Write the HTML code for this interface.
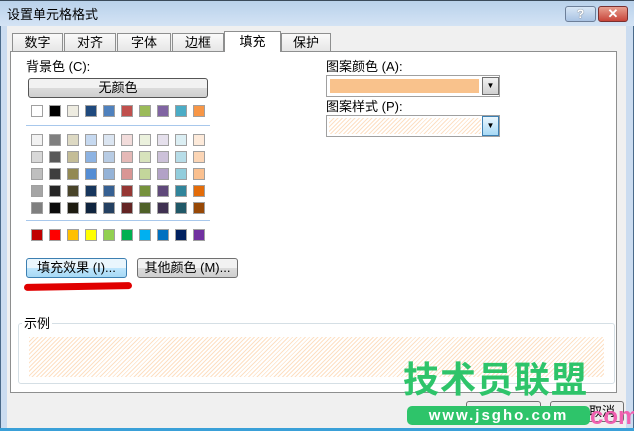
<!DOCTYPE html>
<html><head><meta charset="utf-8"><style>
*{box-sizing:border-box;margin:0;padding:0}
body{width:634px;height:431px;overflow:hidden;background:#f0f0f0;font-family:"Liberation Sans","Noto Sans CJK SC","WenQuanYi Zen Hei",sans-serif;font-size:12px;color:#000;position:relative}
.a{position:absolute}
.title{left:0;top:0;width:634px;height:26px;background:linear-gradient(#b9d1ea,#c9dcf1 60%,#d3e3f4);border-top:1px solid #3a4a5a}
.tab{top:33px;height:18px;background:linear-gradient(#fafafa,#e6e6e6);border:1px solid #8e8f8f;border-bottom:none;text-align:center;line-height:17px;font-size:13px}
.sw{width:12px;height:12px;border:1px solid #a0a0a0}
.btn{border:1px solid #707070;border-radius:3px;background:linear-gradient(#f2f2f2 50%,#dcdcdc 50%,#cfcfcf);text-align:center;line-height:18px}
.hatch{background:repeating-linear-gradient(135deg,#fde0c4 0 1px,#fff 1px 3px)}
.lbl{font-size:13px;line-height:15px}
</style></head><body>
<div class="a title"></div>
<div class="a" style="left:0;top:26px;width:7px;height:405px;background:#cbdcf0;border-left:1px solid #4a6a8a"></div>
<div class="a" style="left:626px;top:26px;width:8px;height:405px;background:#cbdcf0;border-right:1px solid #4a6a8a"></div>
<div class="a" style="left:0;top:428px;width:634px;height:3px;background:#3aa0d8"></div>
<div class="a" style="left:7px;top:4px;font-size:13px;color:#000">设置单元格格式</div>
<div class="a" style="left:565px;top:6px;width:31px;height:16px;border:1px solid #6d7f99;border-radius:3px;background:linear-gradient(#d8e6f5,#a9c3e3);text-align:center;font-weight:bold;line-height:14px;color:#fff;text-shadow:0 0 1px #333">?</div>
<div class="a" style="left:598px;top:6px;width:30px;height:16px;border:1px solid #7a3030;border-radius:3px;background:linear-gradient(#e8a090,#c8453a);text-align:center;font-weight:bold;line-height:14px;color:#fff;font-size:13px">✕</div>

<div class="a" style="left:10px;top:51px;width:607px;height:342px;background:#fff;border:1px solid #8e8f8f"></div>
<div class="a tab" style="left:12px;width:51px">数字</div>
<div class="a tab" style="left:64px;width:52px">对齐</div>
<div class="a tab" style="left:117px;width:54px">字体</div>
<div class="a tab" style="left:172px;width:52px">边框</div>
<div class="a tab" style="left:224px;top:31px;height:21px;width:57px;background:#fff;line-height:19px">填充</div>
<div class="a tab" style="left:281px;width:50px">保护</div>

<div class="a lbl" style="left:26px;top:59px">背景色 (C):</div>
<div class="a btn" style="left:28px;top:78px;width:180px;height:20px;border-color:#555;font-size:13px">无颜色</div>
<div id="sw"></div>
<div class="a" style="left:26px;top:125px;width:184px;height:1px;background:#a8c8ec"></div>
<div class="a" style="left:26px;top:220px;width:184px;height:1px;background:#a8c8ec"></div>
<div class="a btn" style="left:26px;top:258px;width:101px;height:20px;border-color:#3c7fb1;background:linear-gradient(#eaf6fd 50%,#bee6fd 50%,#a7d9f5);font-size:13px">填充效果 (I)...</div>
<div class="a btn" style="left:137px;top:258px;width:101px;height:20px;font-size:13px">其他颜色 (M)...</div>
<div class="a" style="left:24px;top:283px;width:108px;height:7px;background:#e00000;border-radius:4px;transform:rotate(-1deg)"></div>

<div class="a lbl" style="left:326px;top:59px">图案颜色 (A):</div>
<div class="a" style="left:326px;top:75px;width:174px;height:22px;border:1px solid #a0a0a0;background:#fff"></div>
<div class="a" style="left:330px;top:79px;width:149px;height:14px;background:#f9c28c"></div>
<div class="a" style="left:482px;top:77px;width:17px;height:18px;border:1px solid #707070;background:linear-gradient(#f2f2f2,#d0d0d0);font-size:8px;text-align:center;line-height:16px">▼</div>
<div class="a lbl" style="left:326px;top:99px">图案样式 (P):</div>
<div class="a" style="left:326px;top:115px;width:174px;height:22px;border:1px solid #a0a0a0;background:#fff"></div>
<div class="a hatch" style="left:329px;top:118px;width:152px;height:16px"></div>
<div class="a" style="left:482px;top:116px;width:17px;height:20px;border:1px solid #3c7fb1;background:linear-gradient(#eaf6fd,#a7d9f5);font-size:8px;text-align:center;line-height:18px">▼</div>

<div class="a" style="left:18px;top:323px;width:597px;height:61px;border:1px solid #d5dfe5;border-radius:3px"></div>
<div class="a lbl" style="left:22px;top:316px;padding:0 2px;background:#fff">示例</div>
<div class="a hatch" style="left:29px;top:337px;width:575px;height:40px"></div>

<div class="a" style="left:466px;top:401px;width:75px;height:21px;border:1px solid #707070;border-radius:3px;background:#eee"></div>
<div class="a" style="left:550px;top:401px;width:74px;height:21px;border:1px solid #707070;border-radius:3px;background:#eee;text-align:right;padding-right:8px;line-height:19px;font-size:13px">取消</div>
<div class="a" style="left:590px;top:405px;color:#f060b0;font-size:24px;font-weight:bold;line-height:24px">com</div>
<div class="a" style="left:403px;top:358px;width:190px;font-size:36px;font-weight:bold;color:#2ec46a;letter-spacing:1px;line-height:44px;white-space:nowrap">技术员联盟</div>
<div class="a" style="left:407px;top:406px;width:183px;height:19px;background:#2ec46a;border-radius:5px;color:#fff;font-weight:bold;font-size:15px;text-align:center;line-height:19px;letter-spacing:2px">www.jsgho.com</div>
<script>
var rows=[
["#fff","#000","#eeece1","#1f497d","#4f81bd","#c0504d","#9bbb59","#8064a2","#4bacc6","#f79646"],
["#f2f2f2","#7f7f7f","#ddd9c3","#c6d9f0","#dbe5f1","#f2dcdb","#ebf1dd","#e5e0ec","#dbeef3","#fdeada"],
["#d8d8d8","#595959","#c4bd97","#8db3e2","#b8cce4","#e5b9b7","#d7e3bc","#ccc1d9","#b7dde8","#fbd5b5"],
["#bfbfbf","#3f3f3f","#938953","#548dd4","#95b3d7","#d99694","#c3d69b","#b2a2c7","#92cddc","#fac08f"],
["#a5a5a5","#262626","#494429","#17365d","#366092","#953734","#76923c","#5f497a","#31859b","#e36c09"],
["#7f7f7f","#0c0c0c","#1d1b10","#0f243e","#244061","#632423","#4f6128","#3f3151","#205867","#974806"],
["#c00000","#ff0000","#ffc000","#ffff00","#92d050","#00b050","#00b0f0","#0070c0","#002060","#7030a0"]];
var ys=[105,134,151,168,185,202,229],h="";
rows.forEach(function(r,i){r.forEach(function(c,j){h+='<div class="a sw" style="left:'+(31+j*18)+'px;top:'+ys[i]+'px;background:'+c+'"></div>'})});
document.getElementById("sw").innerHTML=h;
</script>
</body></html>
